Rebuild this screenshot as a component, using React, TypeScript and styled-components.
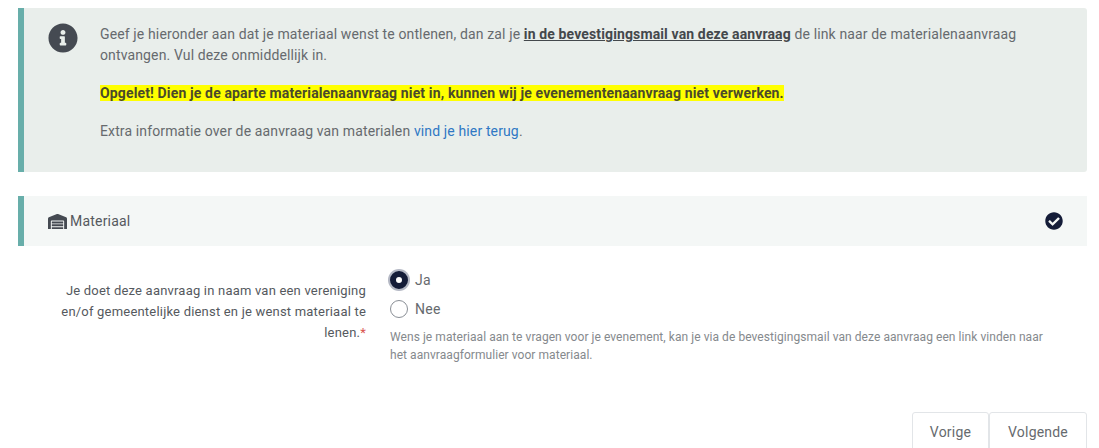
import React from "react";
import styled, { createGlobalStyle } from "styled-components";
import { FaInfoCircle, FaWarehouse, FaCheckCircle } from "react-icons/fa";

const GlobalStyle = createGlobalStyle`
  html, body { margin: 0; padding: 0; background: #fff; }
  body { font-family: Roboto, "Liberation Sans", sans-serif; color: #666a6e; font-size: 14px; }
`;

const Page = styled.div`
  width: 1099px;
  height: 448px;
  overflow: hidden;
  box-sizing: border-box;
  padding: 8px 12px 0 18px;
`;

const Notice = styled.section`
  display: flex;
  height: 164px;
  box-sizing: border-box;
  background: #e9eeeb;
  border-left: 6px solid #68aeaa;
  border-radius: 0 3px 3px 0;
  padding: 15px 24px 0 24px;
`;

const NoticeIcon = styled.div`
  flex: 0 0 30px;
  height: 30px;
  margin-right: 22px;
  color: #454a52;
  font-size: 30px;
  line-height: 0;
`;

const NoticeBody = styled.div`
  flex: 1;
  padding-top: 1px;
  line-height: 21px;
  letter-spacing: 0.13px;
`;

const Para = styled.p`
  margin: 0 0 17px;
`;

const Emphasis = styled.strong`
  color: #44484c;
  text-decoration: underline;
`;

const Mark = styled.mark`
  background: #ffff00;
  color: #4a4a2a;
  font-weight: 700;
  letter-spacing: 0.14px;
`;

const LinkText = styled.a`
  color: #2f78c4;
  text-decoration: none;
`;

const Panel = styled.div`
  display: flex;
  align-items: center;
  justify-content: space-between;
  height: 50px;
  margin-top: 24px;
  box-sizing: border-box;
  border-left: 6px solid #68aeaa;
  background: #f4f7f6;
  padding: 0 24px 0 24px;
`;

const PanelTitle = styled.div`
  display: flex;
  align-items: center;
  gap: 3px;
  color: #55595e;
  letter-spacing: 0.2px;
  svg { font-size: 19px; color: #454a52; }
`;

const PanelCheck = styled.span`
  display: flex;
  font-size: 18px;
  color: #141c38;
`;

const Row = styled.div`
  display: grid;
  grid-template-columns: 348px 1fr;
  column-gap: 24px;
  margin-top: 19px;
`;

const Label = styled.div`
  text-align: right;
  font-size: 13px;
  line-height: 21px;
  padding: 15px 0 0 40px;
  color: #55595e;
  letter-spacing: 0.2px;
`;

const Req = styled.span`
  color: #d9534f;
`;

const RadioRow = styled.label`
  display: flex;
  align-items: center;
  gap: 7px;
  height: 29px;
  color: #666a6e;
  letter-spacing: 0.3px;
`;

const RadioDot = styled.span<{ $on?: boolean }>`
  width: 18px;
  height: 18px;
  border-radius: 50%;
  box-sizing: border-box;
  background: #fff;
  border: ${({ $on }) => ($on ? "6px solid #141c38" : "1px solid #8a8f96")};
  box-shadow: ${({ $on }) => ($on ? "0 0 0 2px #b4b8c4" : "none")};
`;

const Hint = styled.p`
  margin: 5px 0 0;
  font-size: 12px;
  line-height: 18px;
  color: #85898d;
  width: 670px;
  letter-spacing: 0.06px;
`;

const Actions = styled.div`
  display: flex;
  justify-content: flex-end;
  margin-top: 48px;
`;

const Button = styled.button<{ $pad: number }>`
  height: 39px;
  padding: 0 ${({ $pad }) => $pad}px;
  background: #fff;
  border: 1px solid #e2e5e8;
  border-radius: 3px;
  color: #666a6e;
  font: 14px Roboto, sans-serif;
  letter-spacing: 0.2px;
`;

export default function App() {
  return (
    <Page>
      <GlobalStyle />
      <Notice>
        <NoticeIcon><FaInfoCircle /></NoticeIcon>
        <NoticeBody>
          <Para>
            Geef je hieronder aan dat je materiaal wenst te ontlenen, dan zal je{" "}
            <Emphasis>in de bevestigingsmail van deze aanvraag</Emphasis> de link naar de
            materialenaanvraag ontvangen. Vul deze onmiddellijk in.
          </Para>
          <Para><Mark>Opgelet! Dien je de aparte materialenaanvraag niet in, kunnen wij je evenementenaanvraag niet verwerken.</Mark></Para>
          <Para>
            Extra informatie over de aanvraag van materialen <LinkText>vind je hier terug</LinkText>.
          </Para>
        </NoticeBody>
      </Notice>
      <Panel>
        <PanelTitle><FaWarehouse /> Materiaal</PanelTitle>
        <PanelCheck><FaCheckCircle /></PanelCheck>
      </Panel>
      <Row>
        <Label>
          Je doet deze aanvraag in naam van een vereniging en/of gemeentelijke dienst en je wenst materiaal te lenen.<Req>*</Req>
        </Label>
        <div>
          <RadioRow><RadioDot $on /> Ja</RadioRow>
          <RadioRow><RadioDot /> Nee</RadioRow>
          <Hint>
            Wens je materiaal aan te vragen voor je evenement, kan je via de bevestigingsmail van deze aanvraag een link vinden naar het aanvraagformulier voor materiaal.
          </Hint>
        </div>
      </Row>
      <Actions>
        <Button $pad={17}>Vorige</Button>
        <Button $pad={18}>Volgende</Button>
      </Actions>
    </Page>
  );
}
